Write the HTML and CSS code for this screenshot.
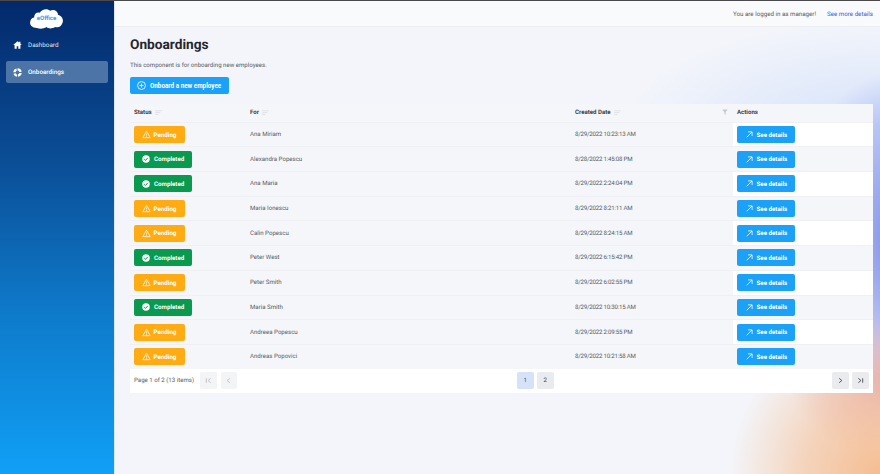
FILE: index.html
```html
<!DOCTYPE html>
<html lang="en">
<head>
<meta charset="UTF-8">
<meta name="viewport" content="width=device-width, initial-scale=1.0">
<title>Onboardings</title>
<link rel="stylesheet" href="styles.css">
</head>
<body>
<svg class="defs" width="0" height="0">
  <symbol id="warn" viewBox="0 0 16 16"><path d="M8 2.2 14.6 13.6H1.4Z" fill="none" stroke="#fff" stroke-width="1.4" stroke-linejoin="round"/><path d="M8 6.4V10M8 11.2V12.4" stroke="#fff" stroke-width="1.3"/></symbol>
  <symbol id="check" viewBox="0 0 16 16"><circle cx="8" cy="8" r="7.5" fill="#fff"/><path d="M4.4 8.2 7 10.8 11.6 5.8" fill="none" stroke="#0a9a4f" stroke-width="2"/></symbol>
  <symbol id="arrow" viewBox="0 0 16 16"><path d="M1.5 14.500 13.500 2.500M4.500 2H14V11.500" fill="none" stroke="#fff" stroke-width="1.800"/></symbol>
  <symbol id="sort" viewBox="0 0 10 8"><path d="M0 1H9M0 3.5H6.5M0 6H4" stroke="#dcdfe4" stroke-width="1.2"/></symbol>
  <symbol id="first" viewBox="0 0 8 8"><path d="M1.500 1.500V6.500M6.500 1.500 3.500 4 6.500 6.500" fill="none" stroke="currentColor"/></symbol>
  <symbol id="prev" viewBox="0 0 8 8"><path d="M5.500 1.500 2.500 4 5.500 6.500" fill="none" stroke="currentColor"/></symbol>
  <symbol id="next" viewBox="0 0 8 8"><path d="M2.500 1.500 5.500 4 2.500 6.500" fill="none" stroke="currentColor"/></symbol>
  <symbol id="last" viewBox="0 0 8 8"><path d="M1.500 1.500 4.500 4 1.500 6.500M6.500 1.500V6.500" fill="none" stroke="currentColor"/></symbol>
</svg>

<aside class="sidebar">
  <div class="logo">
    <svg width="35" height="21" viewBox="0 0 36 22"><path d="M8 21C3 21 0 18 1 14 1.500 11 4 10 5 10 5 6 8 4 11 5 13 1 19 0 22 3 25 1 30 3 30 7 34 8 36 12 35 15 34 19 31 21 27 20 24 22 20 22 18 20 15 22 11 22 8 21Z" fill="#fff"/></svg>
    <span>eOffice</span>
  </div>
  <a class="nav-item" href="#">
    <svg width="9" height="8" viewBox="0 0 16 15"><path d="M8 0.500 0 7.500H2.500V14.500H6.500V10H9.500V14.500H13.500V7.500H16L13.500 5.200V1.500H11V3Z" fill="#fff"/></svg>
    Dashboard
  </a>
  <a class="nav-item active" href="#">
    <svg width="9" height="9" viewBox="0 0 16 16"><path d="M8 0.500A7.500 7.500 0 0 1 15.400 6.500L11.300 7A3.400 3.400 0 0 0 8 4.600ZM15.500 9A7.500 7.500 0 0 1 9 15.400L8.500 11.400A3.400 3.400 0 0 0 11.300 9ZM7 15.500A7.500 7.500 0 0 1 0.700 10L4.700 9.300A3.400 3.400 0 0 0 7 11.400ZM0.500 7.500A7.500 7.500 0 0 1 6 0.800L6.800 4.800A3.400 3.400 0 0 0 4.600 7.500Z" fill="#fff"/></svg>
    Onboardings
  </a>
</aside>

<div class="main">
  <header class="topbar">
    <span>You are logged in as manager!</span>
    <a href="#">See more details</a>
  </header>

  <div class="content">
    <h1>Onboardings</h1>
    <p class="intro">This component is for onboarding new employees.</p>
    <button class="btn add-btn">
      <svg width="9" height="9" viewBox="0 0 16 16"><circle cx="8" cy="8" r="7" fill="none" stroke="#fff" stroke-width="1.500"/><path d="M8 4.500V11.500M4.500 8H11.500" stroke="#fff" stroke-width="1.500"/></svg>
      Onboard a new employee
    </button>

    <div class="grid">
      <div class="row head">
        <div class="cell c1">Status <svg class="sort"><use href="#sort"/></svg></div>
        <div class="cell c2">For <svg class="sort"><use href="#sort"/></svg></div>
        <div class="cell c3">Created Date <svg class="sort"><use href="#sort"/></svg>
          <svg class="filter" viewBox="0 0 10 10"><path d="M0.500 1H9.500L6 5V9.500L4 8.500V5Z" fill="#c3c7cd"/></svg>
        </div>
        <div class="cell c4">Actions</div>
      </div>

      <div class="row">
        <div class="cell c1"><span class="badge pending"><svg><use href="#warn"/></svg>Pending</span></div>
        <div class="cell c2">Ana Miriam</div>
        <div class="cell c3">8/29/2022 10:23:13 AM</div>
        <div class="cell c4"><a class="btn details" href="#"><svg><use href="#arrow"/></svg>See details</a></div>
      </div>
      <div class="row">
        <div class="cell c1"><span class="badge completed"><svg><use href="#check"/></svg>Completed</span></div>
        <div class="cell c2">Alexandra Popescu</div>
        <div class="cell c3">8/28/2022 1:45:08 PM</div>
        <div class="cell c4"><a class="btn details" href="#"><svg><use href="#arrow"/></svg>See details</a></div>
      </div>
      <div class="row">
        <div class="cell c1"><span class="badge completed"><svg><use href="#check"/></svg>Completed</span></div>
        <div class="cell c2">Ana Maria</div>
        <div class="cell c3">8/29/2022 2:24:04 PM</div>
        <div class="cell c4"><a class="btn details" href="#"><svg><use href="#arrow"/></svg>See details</a></div>
      </div>
      <div class="row">
        <div class="cell c1"><span class="badge pending"><svg><use href="#warn"/></svg>Pending</span></div>
        <div class="cell c2">Maria Ionescu</div>
        <div class="cell c3">8/29/2022 8:21:11 AM</div>
        <div class="cell c4"><a class="btn details" href="#"><svg><use href="#arrow"/></svg>See details</a></div>
      </div>
      <div class="row">
        <div class="cell c1"><span class="badge pending"><svg><use href="#warn"/></svg>Pending</span></div>
        <div class="cell c2">Calin Popescu</div>
        <div class="cell c3">8/29/2022 8:24:15 AM</div>
        <div class="cell c4"><a class="btn details" href="#"><svg><use href="#arrow"/></svg>See details</a></div>
      </div>
      <div class="row">
        <div class="cell c1"><span class="badge completed"><svg><use href="#check"/></svg>Completed</span></div>
        <div class="cell c2">Peter West</div>
        <div class="cell c3">8/29/2022 6:15:42 PM</div>
        <div class="cell c4"><a class="btn details" href="#"><svg><use href="#arrow"/></svg>See details</a></div>
      </div>
      <div class="row">
        <div class="cell c1"><span class="badge pending"><svg><use href="#warn"/></svg>Pending</span></div>
        <div class="cell c2">Peter Smith</div>
        <div class="cell c3">8/29/2022 6:02:55 PM</div>
        <div class="cell c4"><a class="btn details" href="#"><svg><use href="#arrow"/></svg>See details</a></div>
      </div>
      <div class="row">
        <div class="cell c1"><span class="badge completed"><svg><use href="#check"/></svg>Completed</span></div>
        <div class="cell c2">Maria Smith</div>
        <div class="cell c3">8/29/2022 10:30:15 AM</div>
        <div class="cell c4"><a class="btn details" href="#"><svg><use href="#arrow"/></svg>See details</a></div>
      </div>
      <div class="row">
        <div class="cell c1"><span class="badge pending"><svg><use href="#warn"/></svg>Pending</span></div>
        <div class="cell c2">Andreea Popescu</div>
        <div class="cell c3">8/29/2022 2:09:55 PM</div>
        <div class="cell c4"><a class="btn details" href="#"><svg><use href="#arrow"/></svg>See details</a></div>
      </div>
      <div class="row">
        <div class="cell c1"><span class="badge pending"><svg><use href="#warn"/></svg>Pending</span></div>
        <div class="cell c2">Andreas Popovici</div>
        <div class="cell c3">8/29/2022 10:21:58 AM</div>
        <div class="cell c4"><a class="btn details" href="#"><svg><use href="#arrow"/></svg>See details</a></div>
      </div>

      <div class="pager">
        <div class="pager-left">
          <span class="page-info">Page 1 of 2 (13 items)</span>
          <span class="page-btn off"><svg><use href="#first"/></svg></span>
          <span class="page-btn off"><svg><use href="#prev"/></svg></span>
        </div>
        <div class="pager-mid">
          <span class="page-btn current">1</span>
          <span class="page-btn">2</span>
        </div>
        <div class="pager-right">
          <span class="page-btn"><svg><use href="#next"/></svg></span>
          <span class="page-btn"><svg><use href="#last"/></svg></span>
        </div>
      </div>
    </div>
  </div>
</div>
</body>
</html>
```

FILE: styles.css
```css
html, body {
  height: 100%;
}
body {
  font-family: Roboto, "Noto Sans", sans-serif;
  font-size: 6.100px;
  text-rendering: geometricPrecision;
  color: #565b64;
  margin: 0;
  padding: 0;
  display: flex;
  height: 474px;
  overflow: hidden;
  border-top: 1px solid #4a4a4c;
  box-sizing: border-box;
  background-color: #f3f5fa;
  white-space: nowrap;
}
.defs {
  position: absolute;
}
.sidebar {
  width: 115px;
  flex-shrink: 0;
  padding: 7px 6px 0;
  box-sizing: border-box;
  background: linear-gradient(180deg, #03296b 0%, #0b4f98 35%, #0e79c9 65%, #10a0f6 100%);
  border-right: 1px solid #dfe3ea;
}
.logo {
  width: 35px;
  height: 22px;
  margin: 0 0 4px 23px;
  position: relative;
  color: #2ba3ee;
  font-size: 6px;
  font-weight: 700;
  text-align: center;
}
.logo span {
  position: absolute;
  left: 0;
  right: 0;
  top: 7px;
}
.nav-item {
  display: flex;
  align-items: center;
  gap: 6px;
  height: 22px;
  padding-left: 7px;
  margin-bottom: 5px;
  border-radius: 2px;
  font-size: 6.300px;
  color: #d9e4f2;
  text-decoration: none;
}
.nav-item.active {
  background-color: #4d74a6;
  color: #fff;
  font-weight: 500;
}
.main {
  flex: 1;
  min-width: 0;
  display: flex;
  flex-direction: column;
  background:
    radial-gradient(circle 150px at 880px 474px, #f5bd92 0%, rgba(245, 189, 146, 0.6) 50%, rgba(245, 189, 146, 0) 100%),
    radial-gradient(ellipse 100px 70px at 890px 385px, rgba(222, 165, 185, 0.9) 0%, rgba(222, 165, 185, 0) 100%),
    radial-gradient(ellipse 110px 170px at 900px 240px, #7d8cea 0%, rgba(125, 140, 234, 0.55) 50%, rgba(125, 140, 234, 0) 100%),
    radial-gradient(ellipse 260px 110px at 880px 130px, rgba(200, 218, 250, 0.7) 0%, rgba(200, 218, 250, 0) 100%),
    #f3f5fa;
  background-attachment: fixed;
}
.topbar {
  height: 26px;
  flex-shrink: 0;
  display: flex;
  justify-content: flex-end;
  align-items: center;
  gap: 11px;
  padding-right: 7px;
  font-size: 6.200px;
  background-color: #f9fafc;
  border-bottom: 1px solid #eceef2;
  box-sizing: border-box;
}
.topbar a {
  color: #2f5fe0;
  text-decoration: none;
}
.content {
  padding: 0 7px 0 15px;
}
h1 {
  margin: 8px 0 0;
  font-size: 13.700px;
  line-height: 20px;
  font-weight: 700;
  color: #24272c;
}
.intro {
  margin: 6px 0 0;
  line-height: 9px;
}
.btn {
  display: inline-flex;
  align-items: center;
  background-color: #1ba1f8;
  color: #fff;
  border: none;
  border-radius: 2px;
  font-family: inherit;
  font-size: 6.200px;
  font-weight: 700;
  text-decoration: none;
}
.add-btn {
  margin-top: 7px;
  height: 17px;
  width: 99px;
  padding: 0 0 0 7px;
  gap: 4px;
  font-size: 6.300px;
}
.grid {
  margin-top: 9.700px;
  background-color: #f4f6fa;
}
.row {
  display: flex;
  height: 24.700px;
  border-top: 1px solid #eef0f4;
  box-sizing: border-box;
}
.row.head {
  height: 18px;
  border-top: none;
  font-weight: 700;
  color: #3d4147;
}
.cell {
  display: flex;
  align-items: center;
  padding-left: 4px;
  box-sizing: border-box;
  position: relative;
}
.c1 { width: 116px; }
.c2 { width: 325px; }
.c3 { width: 162px; }
.c4 { flex: 1; }
.row:not(.head) .c3 {
  letter-spacing: -0.200px;
}
.row:nth-child(even) .c4 {
  background-color: #fff;
}
.row.head .c4 {
  background-color: #f4f6fa;
}
.sort {
  width: 8px;
  height: 6px;
  margin-left: 3px;
}
.filter {
  position: absolute;
  right: 5px;
  top: 5px;
  width: 6px;
  height: 6px;
}
.badge {
  display: inline-flex;
  align-items: center;
  height: 17px;
  border-radius: 2px;
  color: #fff;
  font-size: 6.200px;
  font-weight: 700;
  box-sizing: border-box;
}
.pending {
  width: 51px;
  padding-left: 7.500px;
  gap: 3px;
  background-color: #ffab14;
}
.pending svg {
  width: 9px;
  height: 9px;
}
.completed {
  width: 58px;
  padding-left: 8px;
  gap: 4px;
  background-color: #0a9a4f;
}
.completed svg {
  width: 8px;
  height: 8px;
}
.details {
  width: 58px;
  height: 17px;
  padding-left: 8.500px;
  gap: 4px;
  box-sizing: border-box;
}
.details svg {
  width: 7px;
  height: 7px;
}
.pager {
  display: flex;
  align-items: center;
  height: 24.300px;
  padding: 0 4px;
  background-color: #fff;
  box-sizing: border-box;
}
.pager-left {
  display: flex;
  align-items: center;
  gap: 4px;
  width: 383px;
}
.page-info {
  width: 62px;
}
.pager-mid {
  display: flex;
  gap: 3.500px;
}
.pager-right {
  display: flex;
  gap: 3.500px;
  margin-left: auto;
  margin-right: 0.500px;
}
.page-btn {
  width: 16.500px;
  height: 17px;
  display: flex;
  align-items: center;
  justify-content: center;
  border-radius: 2px;
  background-color: #e9ebee;
  color: #41454b;
}
.page-btn svg {
  width: 7px;
  height: 7px;
}
.page-btn.off {
  background-color: #f3f4f6;
  color: #b8bcc2;
}
.page-btn.current {
  background-color: #d6e2f8;
  color: #2a4a8a;
}
```
